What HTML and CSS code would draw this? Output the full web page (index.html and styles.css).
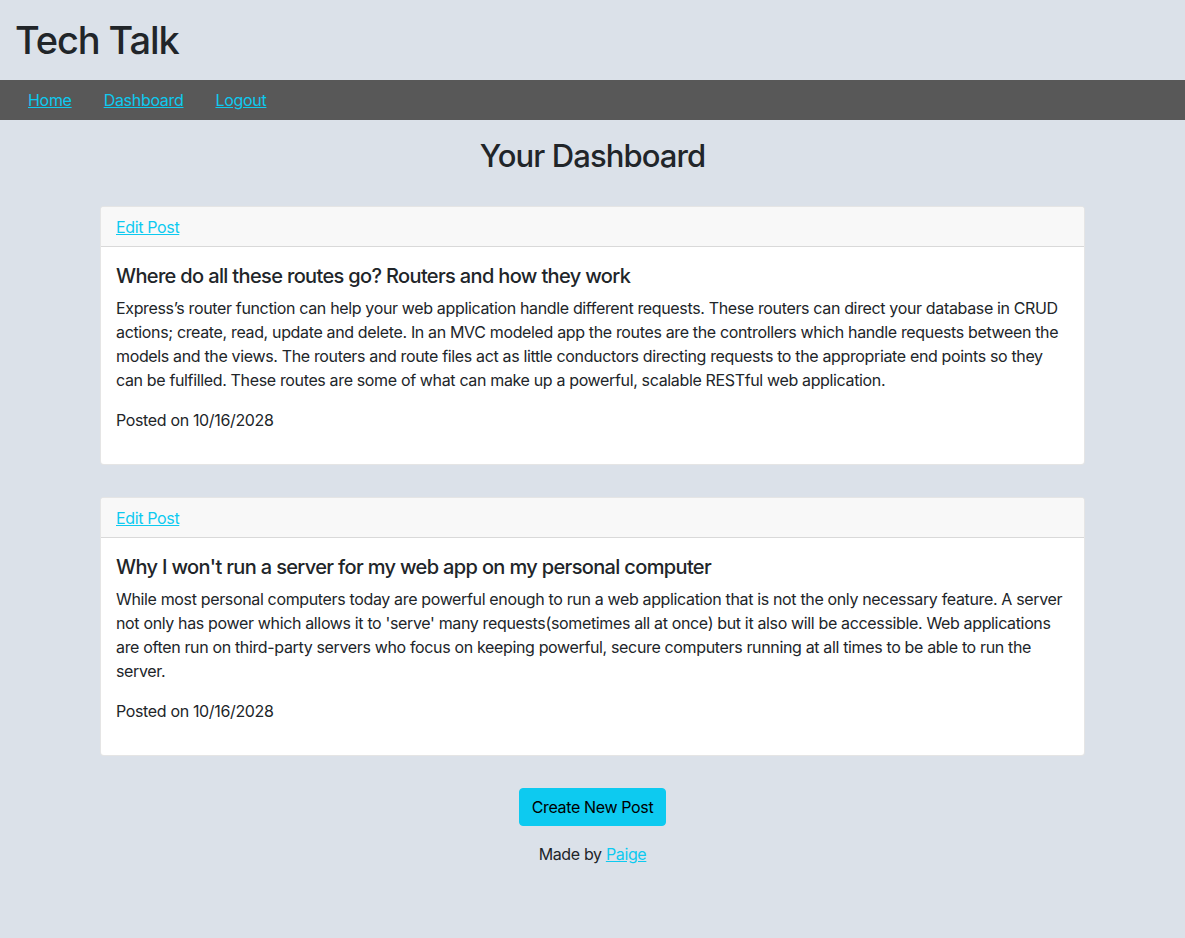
FILE: index.html
```html
<!DOCTYPE html>
<html lang="en">
<head>
<meta charset="utf-8">
<title>Tech Talk</title>
<link rel="stylesheet" href="styles.css">
</head>
<body>
<header class="site-header">
  <h1 class="site-title">Tech Talk</h1>
</header>
<nav class="site-nav">
  <a href="#">Home</a>
  <a href="#">Dashboard</a>
  <a href="#">Logout</a>
</nav>
<main class="main">
  <h2 class="page-title">Your Dashboard</h2>
  <section class="card">
    <div class="card-header"><a href="#">Edit Post</a></div>
    <div class="card-body">
      <h5 class="card-title">Where do all these routes go? Routers and how they work</h5>
      <p>Express’s router function can help your web application handle different requests. These routers can direct your database in CRUD actions; create, read, update and delete. In an MVC modeled app the routes are the controllers which handle requests between the models and the views. The routers and route files act as little conductors directing requests to the appropriate end points so they can be fulfilled. These routes are some of what can make up a powerful, scalable RESTful web application.</p>
      <p>Posted on 10/16/2028</p>
    </div>
  </section>
  <section class="card">
    <div class="card-header"><a href="#">Edit Post</a></div>
    <div class="card-body">
      <h5 class="card-title">Why I won't run a server for my web app on my personal computer</h5>
      <p>While most personal computers today are powerful enough to run a web application that is not the only necessary feature. A server not only has power which allows it to 'serve' many requests(sometimes all at once) but it also will be accessible. Web applications are often run on third-party servers who focus on keeping powerful, secure computers running at all times to be able to run the server.</p>
      <p>Posted on 10/16/2028</p>
    </div>
  </section>
  <div class="actions">
    <button class="btn-create" type="button">Create New Post</button>
  </div>
  <footer class="footer">Made by <a href="#">Paige</a></footer>
</main>
</body>
</html>
```
FILE: styles.css
```css
* { box-sizing: border-box; }
html, body { margin: 0; padding: 0; }
body {
  background: #dbe1e9;
  color: #212529;
  font-family: Inter, "Noto Sans", sans-serif;
  font-size: 16px;
  line-height: 24px;
  letter-spacing: -0.35px;
}
a { color: #0dcaf0; text-decoration: underline; }
.site-header { padding: 16px 15px; height: 80px; }
.site-title {
  margin: 0;
  font-size: 38px;
  line-height: 48px;
  font-weight: 500;
  letter-spacing: -1.1px;
}
.site-nav {
  background: #585858;
  height: 40px;
  display: flex;
  align-items: center;
  padding: 0 12px;
}
.site-nav a { margin: 0 16px; letter-spacing: -0.3px; }
.main { padding: 0 100px 40px; }
.page-title {
  margin: 17px 0 31px;
  text-align: center;
  font-size: 31px;
  line-height: 38px;
  font-weight: 500;
  letter-spacing: -0.9px;
}
.card {
  background: #fff;
  border: 1px solid rgba(0,0,0,0.1);
  border-radius: 4px;
  margin-bottom: 32px;
  overflow: hidden;
}
.card-header {
  background: #f8f8f8;
  border-bottom: 1px solid rgba(0,0,0,0.125);
  padding: 8px 15px 6px;
  height: 40px;
}
.card-body { padding: 17px 15px 16px; }
.card-title {
  margin: 0 0 8px;
  font-size: 20px;
  line-height: 24px;
  font-weight: 500;
  letter-spacing: -0.65px;
}
.card-body p { margin: 0 0 16px; }
.actions { display: flex; justify-content: center; }
.btn-create {
  font: inherit;
  letter-spacing: inherit;
  white-space: nowrap;
  background: #0dcaf0;
  color: #000;
  border: 1px solid #0dcaf0;
  border-radius: 4px;
  padding: 6px 12px;
  height: 38px;
  min-width: 147px;
}
.footer { text-align: center; margin-top: 16px; }
```
